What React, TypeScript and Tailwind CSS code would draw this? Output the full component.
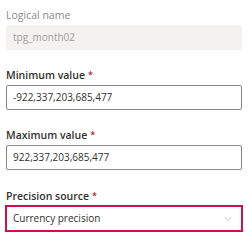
import { ChevronDown } from 'lucide-react';

// One labelled field of the column form
const Field = ({ label, required, children }: { label: string; required?: boolean; children: React.ReactNode }) => (
  <div className="flex flex-col">
    <div className={`h-[16px] leading-[16px] text-[10.5px] ${required ? 'font-semibold text-[#323130]' : 'text-[#8a8886]'}`}>
      {label}
      {required && <span className="ml-[3px] text-[9px] align-top text-[#a4262c]">*</span>}
    </div>
    <div className="mt-[2px]">{children}</div>
  </div>
);

export default function App() {
  return (
    <div
      className="w-[249px] h-[238px] bg-white pl-[6px] pr-[7px] pt-[7px] flex flex-col gap-[17px]"
      style={{ fontFamily: '"Open Sans", "Noto Sans", sans-serif' }}
    >
      <Field label="Logical name">
        <div className="h-[25px] bg-[#f3f2f1] rounded-[2px] px-[7px] flex items-center text-[10px] text-[#a19f9d]">
          tpg_month02
        </div>
      </Field>
      <Field label="Minimum value" required>
        <div className="h-[25px] border border-[#8a8886] rounded-[2px] px-[6px] flex items-center text-[10px] text-[#323130]">
          -922,337,203,685,477
        </div>
      </Field>
      <Field label="Maximum value" required>
        <div className="h-[25px] border border-[#8a8886] rounded-[2px] px-[6px] flex items-center text-[10px] text-[#323130]">
          922,337,203,685,477
        </div>
      </Field>
      <div className="mt-[1px]">
        <Field label="Precision source" required>
          <div className="h-[25px] border border-[#d0104c] ring-1 ring-[#d0104c] px-[6px] flex items-center justify-between text-[10px] text-[#323130]">
            <span>Currency precision</span>
            <ChevronDown size={12} strokeWidth={1.1} className="text-[#8a8886] mr-[1px]" />
          </div>
        </Field>
      </div>
    </div>
  );
}
